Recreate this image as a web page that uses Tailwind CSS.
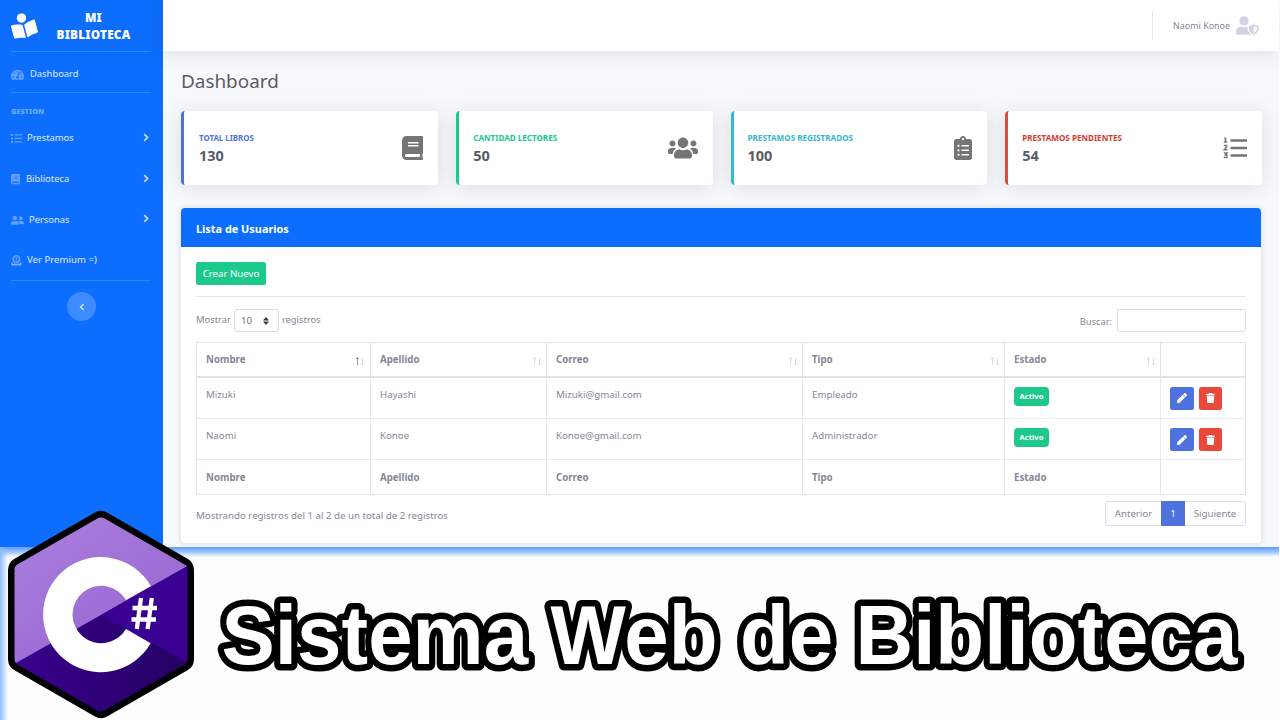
<!DOCTYPE html>
<html lang="es">
<head>
<meta charset="utf-8">
<title>Mi Biblioteca - Dashboard</title>
<script src="https://cdn.jsdelivr.net/npm/@tailwindcss/browser@4"></script>
</head>
<body class="w-[1280px] h-[720px] overflow-hidden relative bg-white font-['Noto_Sans','Open_Sans',sans-serif] text-[9.7px] text-[#858796]">
<svg class="hidden">
  <symbol id="book" viewBox="0 0 448 512"><path d="M448 360V24c0-13.3-10.7-24-24-24H96C43 0 0 43 0 96v320c0 53 43 96 96 96h328c13.3 0 24-10.7 24-24v-16c0-7.5-3.5-14.3-8.9-18.7-4.2-15.4-4.2-59.3 0-74.7 5.4-4.3 8.9-11.1 8.9-18.6zM128 134c0-3.3 2.7-6 6-6h212c3.3 0 6 2.7 6 6v20c0 3.3-2.7 6-6 6H134c-3.3 0-6-2.7-6-6v-20zm0 64c0-3.3 2.7-6 6-6h212c3.3 0 6 2.7 6 6v20c0 3.3-2.7 6-6 6H134c-3.3 0-6-2.7-6-6v-20zm253.4 250H96c-17.7 0-32-14.3-32-32 0-17.6 14.4-32 32-32h285.4c-1.9 17.1-1.9 46.9 0 64z"/></symbol>
  <symbol id="pen" viewBox="0 0 512 512"><path d="M290.74 93.24l128.02 128.02-277.99 277.99-114.14 12.6C11.35 513.54-1.56 500.62.14 485.34l12.7-114.22 277.9-277.88zm207.2-19.06l-60.11-60.11c-18.75-18.75-49.16-18.75-67.91 0l-56.55 56.55 128.02 128.02 56.55-56.55c18.75-18.76 18.75-49.16 0-67.91z"/></symbol>
  <symbol id="trash" viewBox="0 0 448 512"><path d="M432 32H312l-9.4-18.7A24 24 0 0 0 281.1 0H166.8a23.72 23.72 0 0 0-21.4 13.3L136 32H16A16 16 0 0 0 0 48v32a16 16 0 0 0 16 16h416a16 16 0 0 0 16-16V48a16 16 0 0 0-16-16zM53.2 467a48 48 0 0 0 47.9 45h245.8a48 48 0 0 0 47.9-45L416 128H32z"/></symbol>
  <symbol id="chev" viewBox="0 0 6 9"><path d="M1.2 1.2 4.6 4.5 1.2 7.8" fill="none" stroke="currentColor" stroke-width="1.8"/></symbol>
  <symbol id="sort" viewBox="0 0 10 10"><path d="M2.5 9V1.500M1 3 2.500 1.500 4 3" fill="none" stroke="currentColor" stroke-width=".9"/></symbol>
  <symbol id="sortd" viewBox="0 0 10 10"><path d="M7.500 1.500V9M6 7.500 7.500 9 9 7.500" fill="none" stroke="currentColor" stroke-width=".9"/></symbol>
</svg>

<div class="flex h-[547px] overflow-hidden">
  <!-- Sidebar -->
  <aside class="w-[163px] shrink-0 bg-[#0d6efd] px-[11px] flex flex-col text-white/85 text-[9.4px]">
    <div class="h-[51px] flex items-center text-white">
      <svg class="w-[25px] h-[25px] -rotate-[15deg] fill-white" viewBox="0 0 512 512"><path d="M352 96c0-53.02-42.98-96-96-96s-96 42.98-96 96 42.98 96 96 96 96-42.98 96-96zM233.59 241.1c-59.33-36.32-155.43-46.3-203.79-49.05C13.55 191.13 0 203.51 0 219.14v222.8c0 14.33 11.59 26.28 26.49 27.05 43.66 2.29 131.99 10.68 193.04 41.43 9.37 4.72 20.48-1.71 20.48-11.87V252.56c-.01-4.67-2.32-8.95-6.42-11.46zm248.61-49.05c-48.35 2.74-144.46 12.73-203.78 49.05-4.1 2.51-6.41 6.96-6.41 11.63v245.79c0 10.19 11.14 16.63 20.54 11.9 61.04-30.72 149.32-39.11 192.97-41.4 14.9-.78 26.49-12.73 26.49-27.06V219.14c-.01-15.63-13.56-28.01-29.81-27.09z"/></svg>
      <div class="ml-[19px] w-[77px] text-center text-[11.800px] leading-[17px] font-black tracking-[0.2px]">MI<br>BIBLIOTECA</div>
    </div>
    <div class="h-px bg-white/15 mr-[1px]"></div>
    <a class="h-[41px] mt-[1px] pt-[2px] flex items-center">
      <svg class="w-[13px] h-[11.5px] fill-white/35 mr-[6px]" viewBox="0 0 576 512"><path d="M288 32C128.94 32 0 160.94 0 320c0 52.8 14.25 102.26 39.06 144.8 5.61 9.62 16.3 15.2 27.44 15.2h443c11.14 0 21.83-5.58 27.44-15.2C561.75 422.26 576 372.8 576 320c0-159.06-128.94-288-288-288zm0 64c14.71 0 26.58 10.13 30.32 23.65-1.11 2.26-2.64 4.23-3.45 6.67l-9.22 27.67c-5.13 3.49-10.97 6.01-17.64 6.01-17.67 0-32-14.33-32-32S270.33 96 288 96zM96 384c-17.67 0-32-14.33-32-32s14.33-32 32-32 32 14.33 32 32-14.33 32-32 32zm48-160c-17.67 0-32-14.33-32-32s14.33-32 32-32 32 14.33 32 32-14.33 32-32 32zm246.77-72.41l-61.33 184C343.13 347.33 352 364.54 352 384c0 11.72-3.38 22.55-8.88 32H232.88c-5.5-9.45-8.88-20.28-8.88-32 0-33.94 26.5-61.43 59.9-63.59l61.34-184.01c4.17-12.56 17.73-19.45 30.36-15.17 12.57 4.19 19.35 17.79 15.17 30.36zm14.66 57.2l15.52-46.55c3.47-1.29 7.13-2.23 11.05-2.23 17.67 0 32 14.33 32 32s-14.33 32-32 32c-11.38-.01-20.89-6.28-26.57-15.22zM480 384c-17.67 0-32-14.33-32-32s14.33-32 32-32 32 14.33 32 32-14.33 32-32 32z"/></svg>
      Dashboard
    </a>
    <div class="h-px bg-white/15 mr-[1px] -mt-[2px]"></div>
    <div class="h-[12px] mt-[12px] leading-[12px] text-[7.3px] font-black text-white/40">GESTION</div>
    <a class="h-[41px] pt-[2px] flex items-center">
      <svg class="w-[11px] h-[9px] fill-white/35 mr-[5px]" viewBox="0 0 11 9"><path d="M0 0h2v2H0zM0 3.5h2v2H0zM0 7h2v2H0zM3.5.3H11v1.3H3.500zM3.500 3.800H11v1.300H3.500zM3.500 7.300H11v1.300H3.500z"/></svg>
      Prestamos<svg class="w-[6px] h-[9px] ml-auto mr-[3px] mb-[3px] text-white/70"><use href="#chev"/></svg>
    </a>
    <a class="h-[41px] pt-[2px] flex items-center">
      <svg class="w-[9px] h-[10.500px] fill-white/35 mr-[6px]"><use href="#book"/></svg>
      Biblioteca<svg class="w-[6px] h-[9px] ml-auto mr-[3px] mb-[3px] text-white/70"><use href="#chev"/></svg>
    </a>
    <a class="h-[40px] pt-[2px] flex items-center">
      <svg class="w-[13px] h-[10.500px] fill-white/35 mr-[5px]" viewBox="0 0 640 512"><path d="M192 256c61.9 0 112-50.1 112-112S253.9 32 192 32 80 82.1 80 144s50.1 112 112 112zm76.8 32h-8.3c-20.8 10-43.9 16-68.5 16s-47.6-6-68.5-16h-8.3C51.6 288 0 339.6 0 403.2V432c0 26.5 21.5 48 48 48h288c26.5 0 48-21.5 48-48v-28.8c0-63.6-51.6-115.2-115.2-115.2zM480 256c53 0 96-43 96-96s-43-96-96-96-96 43-96 96 43 96 96 96zm48 32h-3.8c-13.9 4.8-28.6 8-44.2 8s-30.3-3.2-44.2-8H432c-20.4 0-39.2 5.9-55.7 15.4 24.4 26.3 39.7 61.2 39.7 99.8v38.4c0 2.2-.5 4.3-.6 6.4H592c26.5 0 48-21.5 48-48 0-61.9-50.1-112-112-112z"/></svg>
      Personas<svg class="w-[6px] h-[9px] ml-auto mr-[3px] mb-[3px] text-white/70"><use href="#chev"/></svg>
    </a>
    <a class="h-[41px] pt-[2px] flex items-center text-[9.650px]">
      <svg class="w-[11px] h-[11px] mr-[5px]" viewBox="0 0 11 11" fill="none" stroke="white" stroke-opacity=".35"><circle cx="5.300" cy="4" r="3.200" stroke-width="1.600"/><path d="M5.300 2.300v3.400" stroke-width="1.300"/><path d="M.9 7v3h8.800V7" stroke-width="1"/><path d="M.3 9.300h10" stroke-width="1.600"/></svg>
      Ver Premium =)
    </a>
    <div class="h-px bg-white/15 mr-[1px]"></div>
    <div class="mt-[11px] ml-[56px] w-[29px] h-[29px] rounded-full bg-white/20 flex items-center justify-center text-white/70"><svg class="w-[6px] h-[8px] rotate-180"><use href="#chev"/></svg></div>
  </aside>

  <!-- Content -->
  <main class="w-[1116px] bg-[#f8f9fc] flex flex-col">
    <header class="h-[51px] shrink-0 bg-white shadow-[0_2px_20px_rgba(58,59,69,0.15)] flex items-center justify-end pr-[20px]">
      <div class="w-px h-[29px] bg-[#e3e6f0] mr-[20px]"></div>
      <span class="text-[8.920px] pt-px">Naomi Konoe</span>
      <svg class="w-[23px] h-[19px] ml-[6px] fill-[#d1d3e2]" viewBox="0 0 640 512"><path d="M622.3 271.1l-115.2-45c-4.1-1.6-12.6-3.7-22.2 0l-115.2 45c-10.7 4.2-17.7 14-17.7 24.9 0 111.6 68.7 188.8 132.9 213.9 9.6 3.700 18 1.600 22.200 0C558.400 489.900 640 420.500 640 296c0-10.900-7-20.700-17.700-24.900zM496 462.400V273.300l95.500 37.300c-5.600 87.100-60.900 135.400-95.500 151.800zM224 256c70.700 0 128-57.300 128-128S294.700 0 224 0 96 57.300 96 128s57.300 128 128 128zm96 40c0-2.500.8-4.800 1.100-7.200-2.500-.1-4.900-.8-7.500-.8h-16.700c-22.200 10.200-46.900 16-72.900 16s-50.600-5.800-72.900-16h-16.700C60.200 288 0 348.200 0 422.400V464c0 26.500 21.500 48 48 48h352c6.800 0 13.300-1.500 19.200-4-54-42.900-99.200-116.700-99.200-212z"/></svg>
    </header>
    <div class="pl-[18px] pr-[17px]">
      <h1 class="mt-[17px] h-[26px] leading-[26px] text-[18.900px] text-[#5a5c69]">Dashboard</h1>
      <div class="mt-[17px] grid grid-cols-4 gap-[18px]">
        <div class="h-[74px] bg-white rounded-[4px] border-l-[3px] border-[#4e73df] shadow-[0_2px_20px_rgba(58,59,69,0.15)] flex items-center justify-between pl-[15px] pr-[15px]">
          <div><div class="text-[7.900px] leading-[14px] font-bold text-[#4e73df]">TOTAL LIBROS</div><div class="text-[14.500px] leading-[20px] font-bold text-[#5a5c69]">130</div></div>
          <svg class="w-[21px] h-[24px] fill-[#757575]"><use href="#book"/></svg>
        </div>
        <div class="h-[74px] bg-white rounded-[4px] border-l-[3px] border-[#1cc88a] shadow-[0_2px_20px_rgba(58,59,69,0.15)] flex items-center justify-between pl-[14.500px] pr-[15px]">
          <div><div class="text-[8.080px] leading-[14px] font-bold text-[#1cc88a]">CANTIDAD LECTORES</div><div class="text-[14.500px] leading-[20px] font-bold text-[#5a5c69]">50</div></div>
          <svg class="w-[30px] h-[24px] fill-[#757575]" viewBox="0 0 640 512"><path d="M96 224c35.300 0 64-28.700 64-64s-28.700-64-64-64-64 28.700-64 64 28.700 64 64 64zm448 0c35.300 0 64-28.700 64-64s-28.700-64-64-64-64 28.700-64 64 28.700 64 64 64zm32 32h-64c-17.600 0-33.500 7.100-45.100 18.600 40.300 22.100 68.900 62 75.100 109.400h66c17.700 0 32-14.300 32-32v-32c0-35.300-28.700-64-64-64zm-256 0c61.900 0 112-50.100 112-112S381.900 32 320 32 208 82.100 208 144s50.100 112 112 112zm76.800 32h-8.300c-20.800 10-43.900 16-68.500 16s-47.600-6-68.500-16h-8.300C179.600 288 128 339.600 128 403.200V432c0 26.500 21.500 48 48 48h288c26.500 0 48-21.500 48-48v-28.800c0-63.600-51.600-115.200-115.200-115.200zm-223.700-13.400C161.500 263.100 145.600 256 128 256H64c-35.300 0-64 28.700-64 64v32c0 17.700 14.300 32 32 32h65.900c6.300-47.400 34.900-87.300 75.200-109.400z"/></svg>
        </div>
        <div class="h-[74px] bg-white rounded-[4px] border-l-[3px] border-[#36b9cc] shadow-[0_2px_20px_rgba(58,59,69,0.15)] flex items-center justify-between pl-[14px] pr-[15px]">
          <div><div class="text-[8.120px] leading-[14px] font-bold text-[#36b9cc]">PRESTAMOS REGISTRADOS</div><div class="text-[14.500px] leading-[20px] font-bold text-[#5a5c69]">100</div></div>
          <svg class="w-[18px] h-[24px] fill-[#757575]" viewBox="0 0 384 512"><path d="M336 64h-80c0-35.300-28.700-64-64-64s-64 28.700-64 64H48C21.500 64 0 85.500 0 112v352c0 26.500 21.500 48 48 48h288c26.500 0 48-21.500 48-48V112c0-26.500-21.500-48-48-48zM96 424c-13.300 0-24-10.700-24-24s10.700-24 24-24 24 10.700 24 24-10.700 24-24 24zm0-96c-13.300 0-24-10.700-24-24s10.700-24 24-24 24 10.700 24 24-10.700 24-24 24zm0-96c-13.300 0-24-10.700-24-24s10.700-24 24-24 24 10.700 24 24-10.700 24-24 24zm96-192c13.300 0 24 10.700 24 24s-10.700 24-24 24-24-10.700-24-24 10.700-24 24-24zm128 368c0 4.400-3.600 8-8 8H168c-4.400 0-8-3.600-8-8v-16c0-4.400 3.600-8 8-8h144c4.400 0 8 3.600 8 8v16zm0-96c0 4.400-3.600 8-8 8H168c-4.400 0-8-3.600-8-8v-16c0-4.400 3.600-8 8-8h144c4.400 0 8 3.600 8 8v16zm0-96c0 4.400-3.600 8-8 8H168c-4.400 0-8-3.600-8-8v-16c0-4.400 3.600-8 8-8h144c4.400 0 8 3.600 8 8v16z"/></svg>
        </div>
        <div class="h-[74px] bg-white rounded-[4px] border-l-[3px] border-[#e74a3b] shadow-[0_2px_20px_rgba(58,59,69,0.15)] flex items-center justify-between pl-[14px] pr-[15px]">
          <div><div class="text-[8.100px] leading-[14px] font-bold text-[#d23b36]">PRESTAMOS PENDIENTES</div><div class="text-[14.500px] leading-[20px] font-bold text-[#5a5c69]">54</div></div>
          <svg class="w-[24px] h-[24px]" viewBox="0 0 24 24" fill="none" stroke="#757575"><path d="M7.500 4.500H24M7.500 12H24M7.500 19.500H24" stroke-width="2.400"/><path d="M1.200 2.200h1.300V6M.8 6h3.500M.8 9.400h2.800v1.600L1.200 13.700h3.200M.8 17h3.200L2.400 19h1.400v2.400H.7" stroke-width="1.500"/></svg>
        </div>
      </div>

      <section class="mt-[23px] mr-[1px] h-[335px] bg-white rounded-[4px] shadow-[0_0_4px_2px_rgba(58,59,69,0.10)]">
        <div class="h-[39px] rounded-t-[4px] bg-[#0d6efd] text-white font-bold text-[10.900px] px-[15px] leading-[41px]">Lista de Usuarios</div>
        <div class="px-[15px] pt-[15px]">
          <button class="block w-[70px] h-[23px] rounded-[2.500px] bg-[#1cc88a] text-white text-[9.700px] leading-[23px]">Crear Nuevo</button>
          <div class="mt-[11px] h-px bg-[#e8e8ea]"></div>
          <div class="mt-[12px] h-[23px] flex items-center">
            <span class="mb-[1px] text-[9.400px]">Mostrar</span>
            <span class="ml-[3px] w-[45px] h-[23px] border border-[#d9dbe4] rounded-[3px] flex items-center pl-[6px] pt-[1px] text-[#6e707e]">10
              <svg class="w-[6px] h-[8px] ml-[11px] fill-[#343a40]" viewBox="0 0 6 8"><path d="M3 0 6 3.400H0zM3 8 6 4.600H0z"/></svg></span>
            <span class="ml-[3px] mb-[1px] text-[9.400px]">registros</span>
            <span class="ml-auto mt-[2px] text-[9.300px]">Buscar:</span>
            <span class="ml-[5px] w-[129px] h-[23px] border border-[#d9dbe4] rounded-[2.500px]"></span>
          </div>
          <table class="mt-[10px] w-[1050px] table-fixed border-collapse border border-[#e3e6f0] text-left [&_td]:border [&_td]:border-[#e9eaef] [&_th]:border [&_th]:border-[#e3e4ea] [&_td]:pl-[9px] [&_th]:pl-[9px] [&_td]:pt-[8px] [&_td]:align-top [&_td]:leading-[18px]">
            <colgroup><col class="w-[174px]"><col class="w-[176px]"><col class="w-[256px]"><col class="w-[202px]"><col class="w-[156px]"><col class="w-[85px]"></colgroup>
            <thead class="[&_th]:border-b-2 [&_th]:border-b-[#e0e2ea]">
              <tr class="h-[34px]">
                <th><div class="flex items-center justify-between pr-[5px] pt-[3px]">Nombre<svg class="size-[10px]"><use href="#sort" class="text-[#858796]"/><use href="#sortd" class="text-[#d0d1d8]"/></svg></div></th>
                <th><div class="flex items-center justify-between pr-[4px] pt-[3px]">Apellido<svg class="size-[10px] text-[#d8d9df]"><use href="#sort"/><use href="#sortd"/></svg></div></th>
                <th><div class="flex items-center justify-between pr-[4px] pt-[3px]">Correo<svg class="size-[10px] text-[#d8d9df]"><use href="#sort"/><use href="#sortd"/></svg></div></th>
                <th><div class="flex items-center justify-between pr-[4px] pt-[3px]">Tipo<svg class="size-[10px] text-[#d8d9df]"><use href="#sort"/><use href="#sortd"/></svg></div></th>
                <th><div class="flex items-center justify-between pr-[4px] pt-[3px]">Estado<svg class="size-[10px] text-[#d8d9df]"><use href="#sort"/><use href="#sortd"/></svg></div></th>
                <th></th>
              </tr>
            </thead>
            <tbody>
              <tr class="h-[42px]"><td>Mizuki</td><td>Hayashi</td><td>Mizuki@gmail.com</td><td>Empleado</td>
                <td><span class="mt-px block w-[35px] h-[19px] rounded-[4px] bg-[#1cc88a] text-white font-bold text-[7.700px] leading-[19px] text-center">Activo</span></td>
                <td><div class="mt-px flex gap-[5px]"><span class="w-[24px] h-[23px] rounded-[2.500px] bg-[#4e73df] flex items-center justify-center"><svg class="size-[10px] fill-white"><use href="#pen"/></svg></span><span class="w-[23px] h-[23px] rounded-[2.500px] bg-[#e74a3b] flex items-center justify-center"><svg class="w-[9px] h-[10px] fill-white"><use href="#trash"/></svg></span></div></td></tr>
              <tr class="h-[41px]"><td>Naomi</td><td>Konoe</td><td>Konoe@gmail.com</td><td>Administrador</td>
                <td><span class="mt-px block w-[35px] h-[19px] rounded-[4px] bg-[#1cc88a] text-white font-bold text-[7.700px] leading-[19px] text-center">Activo</span></td>
                <td><div class="mt-px flex gap-[5px]"><span class="w-[24px] h-[23px] rounded-[2.500px] bg-[#4e73df] flex items-center justify-center"><svg class="size-[10px] fill-white"><use href="#pen"/></svg></span><span class="w-[23px] h-[23px] rounded-[2.500px] bg-[#e74a3b] flex items-center justify-center"><svg class="w-[9px] h-[10px] fill-white"><use href="#trash"/></svg></span></div></td></tr>
            </tbody>
            <tfoot class="[&_th]:pt-[2px]"><tr class="h-[35px]"><th>Nombre</th><th>Apellido</th><th>Correo</th><th>Tipo</th><th>Estado</th><th></th></tr></tfoot>
          </table>
          <div class="mt-[6px] flex justify-between items-start">
            <span class="mt-[6px] leading-[18px]">Mostrando registros del 1 al 2 de un total de 2 registros</span>
            <div class="h-[25px] w-[141px] flex border border-[#dddfeb] rounded-[3px] leading-[24px] text-center">
              <span class="w-[55px]">Anterior</span><span class="-my-px w-[24px] h-[25px] leading-[26px] bg-[#4e73df] text-white">1</span><span class="flex-1">Siguiente</span>
            </div>
          </div>
        </div>
      </section>
    </div>
  </main>
</div>

<!-- Caption banner -->
<footer class="relative h-[173px] bg-[#fdfdfd] overflow-hidden">
  <div class="absolute left-0 right-px top-0 h-[10px] bg-linear-to-b from-[#5b9cf8] via-[#9cc5fd] to-transparent"></div>
  <div class="absolute left-0 top-0 bottom-0 w-[8px] bg-linear-to-r from-[#8fbcfb] to-transparent"></div>
</footer>
<svg class="absolute left-0 top-[500px] w-[1280px] h-[220px]" viewBox="0 500 1280 220">
  <defs>
    <linearGradient id="lt" x1="0" y1="0" x2=".6" y2="1"><stop offset="0" stop-color="#ab84e0"/><stop offset="1" stop-color="#9460cd"/></linearGradient>
    <linearGradient id="dk" x1="0" y1="0" x2="1" y2="0"><stop offset="0" stop-color="#3a0090"/><stop offset="1" stop-color="#240060"/></linearGradient>
    <mask id="hex"><path d="M101 524 181 570V659L101 705 21 659V570Z" fill="#fff" stroke="#fff" stroke-width="13" stroke-linejoin="round"/></mask>
  </defs>
  <path d="M101 524 181 570V659L101 705 21 659V570Z" stroke="#000" stroke-width="26" stroke-linejoin="round"/>
  <g mask="url(#hex)">
    <path d="M0 500H200V720H0z" fill="url(#lt)"/>
    <path d="M200 559 0 672V720H200Z" fill="url(#dk)"/>
    <path d="M200 559 101 615 200 670Z" fill="#3a0092"/>
  </g>
  <path d="M150.700 586A57.600 57.600 0 1 0 150.700 643.200L126 629A28.700 28.700 0 1 1 126 600Z" fill="#fff"/>
  <path d="M141 598 136.800 629M151.800 598 147.600 629M132.500 608H157M131.500 619.500H156" stroke="#fff" stroke-width="4.300" fill="none"/>
  <text transform="translate(221.500 664) scale(1 1.055)" font-family="Liberation Sans, Arial, sans-serif" font-weight="700" font-size="79.900" textLength="1016" fill="#fff" stroke="#000" stroke-width="12.400" stroke-linejoin="round" paint-order="stroke">Sistema Web de Biblioteca</text>
</svg>
</body>
</html>
